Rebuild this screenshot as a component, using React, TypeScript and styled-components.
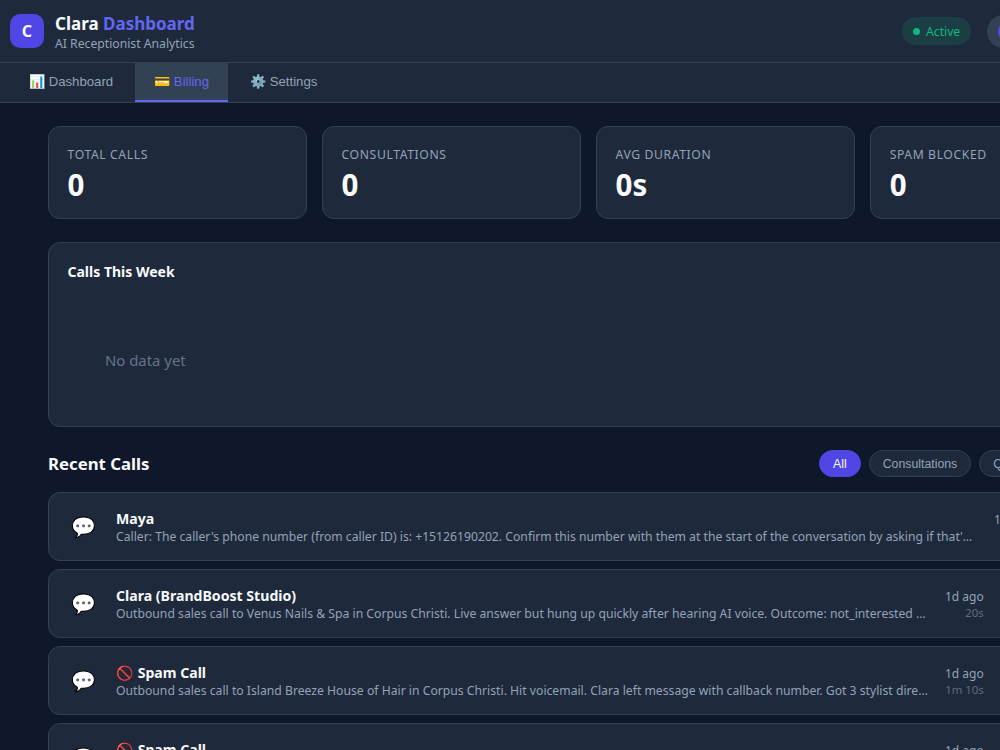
import { createGlobalStyle } from "styled-components"
import styled from "styled-components"

const GlobalStyle = createGlobalStyle`
  html, body {
    margin: 0;
    overflow: hidden;
    background: #0f172a;
    color: #f8fafc;
    font-family: "Noto Sans", sans-serif;
  }
`

const Page = styled.div`
  width: 1177px;
  min-height: 750px;
  background: #0f172a;
`

const Header = styled.header`
  height: 62px;
  display: flex;
  align-items: center;
  justify-content: space-between;
  padding: 0 70px 0 10px;
  background: #1e293b;
  border-bottom: 1px solid #334155;
`

const Brand = styled.div`
  display: flex;
  align-items: center;
  gap: 11px;
`

const Logo = styled.div`
  width: 34px;
  height: 34px;
  border-radius: 10px;
  background: #4f46e5;
  display: flex;
  align-items: center;
  justify-content: center;
  font-size: 16px;
  font-weight: 700;
`

const Title = styled.h1`
  margin: 1px 0 0;
  font-size: 17px;
  line-height: 24px;
  font-weight: 700;

  span {
    color: #6366f1;
  }
`

const Subtitle = styled.div`
  font-size: 12.2px;
  line-height: 16px;
  color: #94a3b8;
`

const HeaderRight = styled.div`
  display: flex;
  align-items: center;
  gap: 16px;
`

const Status = styled.div`
  height: 28px;
  width: 69px;
  box-sizing: border-box;
  padding-left: 11px;
  display: flex;
  align-items: center;
  gap: 6px;
  border-radius: 14px;
  background: rgba(16, 185, 129, 0.15);
  color: #10b981;
  font-size: 12.2px;
`

const Dot = styled.i`
  width: 7px;
  height: 7px;
  border-radius: 50%;
  background: #10b981;
`

const UserPill = styled.div`
  width: 120px;
  height: 33px;
  box-sizing: border-box;
  padding: 5px 11px;
  border-radius: 17px;
  background: #334155;

  &::before {
    content: "";
    display: block;
    width: 23px;
    height: 23px;
    border-radius: 50%;
    background: #4f46e5;
  }
`

const Tabs = styled.nav`
  display: flex;
  gap: 3px;
  height: 39px;
  padding-left: 10px;
  background: #1e293b;
  border-bottom: 1px solid #334155;
`

const Tab = styled.button<{ $active?: boolean }>`
  border: 0;
  border-bottom: 2px solid ${({ $active }) => ($active ? "#6366f1" : "transparent")};
  padding: 0 19px;
  background: ${({ $active }) => ($active ? "#334155" : "transparent")};
  color: ${({ $active }) => ($active ? "#6366f1" : "#94a3b8")};
  font-family: "Liberation Sans", sans-serif;
  font-size: 13.2px;
`

const Main = styled.main`
  padding: 23px 48px 0;
`

const Stats = styled.div`
  display: grid;
  grid-template-columns: repeat(4, 1fr);
  gap: 15.2px;
  margin-bottom: 23px;
`

const StatCard = styled.div`
  height: 93px;
  box-sizing: border-box;
  padding: 20px 18.5px 0;
  background: #1e293b;
  border: 1px solid #334155;
  border-radius: 12px;
`

const StatLabel = styled.div`
  font-size: 12.2px;
  line-height: 16px;
  letter-spacing: 0.6px;
  text-transform: uppercase;
  color: #94a3b8;
`

const StatValue = styled.div`
  margin-top: 3px;
  font-size: 29.5px;
  line-height: 38px;
  font-weight: 700;
`

const ChartCard = styled.section`
  height: 185px;
  box-sizing: border-box;
  padding: 19px 18.5px;
  background: #1e293b;
  border: 1px solid #334155;
  border-radius: 12px;
  margin-bottom: 21px;
`

const ChartTitle = styled.h3`
  margin: 0;
  font-size: 14px;
  line-height: 20px;
  font-weight: 700;
`

const Empty = styled.div`
  margin: 68px 0 0 37.5px;
  font-size: 14.9px;
  line-height: 20px;
  color: #64748b;
`

const SectionHead = styled.div`
  display: flex;
  align-items: center;
  justify-content: space-between;
  height: 30px;
  margin-bottom: 14px;
`

const SectionTitle = styled.h2`
  margin: 0;
  font-size: 16.8px;
  font-weight: 700;
`

const Filters = styled.div`
  display: flex;
  gap: 8px;
  margin-right: 14px;
`

const Filter = styled.button<{ $active?: boolean }>`
  height: 27px;
  padding: 1px 13px 0;
  border-radius: 14px;
  border: 1px solid ${({ $active }) => ($active ? "#4f46e5" : "#334155")};
  background: ${({ $active }) => ($active ? "#4f46e5" : "#1e293b")};
  color: ${({ $active }) => ($active ? "#f8fafc" : "#94a3b8")};
  font-family: "Liberation Sans", sans-serif;
  font-size: 12.3px;
`

const List = styled.div`
  display: flex;
  flex-direction: column;
  gap: 8px;
`

const Row = styled.div`
  height: 69px;
  box-sizing: border-box;
  display: flex;
  align-items: center;
  padding: 1px 19px 0 20px;
  background: #1e293b;
  border: 1px solid #334155;
  border-radius: 12px;
`

const RowIcon = styled.div`
  width: 30px;
  margin-right: 17px;
  text-align: center;
  font-size: 20px;
  font-family: "Noto Color Emoji", sans-serif;
`

const RowBody = styled.div<{ $wide?: boolean }>`
  width: ${({ $wide }) => ($wide ? "857px" : "813px")};
  margin-right: ${({ $wide }) => ($wide ? "21px" : "16px")};
  flex-shrink: 0;
`

const RowName = styled.div`
  font-size: 14.1px;
  line-height: 17px;
  font-weight: 700;
`

const RowText = styled.div`
  margin-top: 1px;
  font-size: 12.2px;
  line-height: 17px;
  color: #94a3b8;
  white-space: nowrap;
  overflow: hidden;
  text-overflow: ellipsis;
`

const RowMeta = styled.div`
  text-align: right;
  white-space: nowrap;
`

const When = styled.div`
  font-size: 12px;
  line-height: 17px;
  color: #94a3b8;
`

const Duration = styled.div`
  font-size: 11.4px;
  line-height: 15px;
  color: #5f6b7f;
`

const stats = [
  { label: "Total Calls", value: "0" },
  { label: "Consultations", value: "0" },
  { label: "Avg Duration", value: "0s" },
  { label: "Spam Blocked", value: "0" },
]

const calls = [
  {
    name: "Maya",
    wide: true,
    text: "Caller: The caller's phone number (from caller ID) is: +15126190202. Confirm this number with them at the start of the conversation by asking if that's the best number to reach them on today.",
    duration: "45s",
  },
  {
    name: "Clara (BrandBoost Studio)",
    text: "Outbound sales call to Venus Nails & Spa in Corpus Christi. Live answer but hung up quickly after hearing AI voice. Outcome: not_interested and no follow up is needed at this time.",
    duration: "20s",
  },
  {
    name: "🚫 Spam Call",
    text: "Outbound sales call to Island Breeze House of Hair in Corpus Christi. Hit voicemail. Clara left message with callback number. Got 3 stylist direct numbers from the recording.",
    duration: "1m 10s",
  },
  {
    name: "🚫 Spam Call",
    text: "Outbound sales call to a salon in Corpus Christi. Hit voicemail. Clara left message with callback number.",
    duration: "55s",
  },
]

export default function App() {
  return (
    <Page>
      <GlobalStyle />
      <Header>
        <Brand>
          <Logo>C</Logo>
          <div>
            <Title>
              Clara <span>Dashboard</span>
            </Title>
            <Subtitle>AI Receptionist Analytics</Subtitle>
          </div>
        </Brand>
        <HeaderRight>
          <Status>
            <Dot />
            Active
          </Status>
          <UserPill />
        </HeaderRight>
      </Header>
      <Tabs>
        <Tab>📊 Dashboard</Tab>
        <Tab $active>💳 Billing</Tab>
        <Tab>⚙️ Settings</Tab>
      </Tabs>
      <Main>
        <Stats>
          {stats.map((stat) => (
            <StatCard key={stat.label}>
              <StatLabel>{stat.label}</StatLabel>
              <StatValue>{stat.value}</StatValue>
            </StatCard>
          ))}
        </Stats>
        <ChartCard>
          <ChartTitle>Calls This Week</ChartTitle>
          <Empty>No data yet</Empty>
        </ChartCard>
        <SectionHead>
          <SectionTitle>Recent Calls</SectionTitle>
          <Filters>
            <Filter $active>All</Filter>
            <Filter>Consultations</Filter>
            <Filter>Quotes</Filter>
            <Filter>Spam</Filter>
          </Filters>
        </SectionHead>
        <List>
          {calls.map((call, i) => (
            <Row key={i}>
              <RowIcon>💬</RowIcon>
              <RowBody $wide={call.wide}>
                <RowName>{call.name}</RowName>
                <RowText>{call.text}</RowText>
              </RowBody>
              <RowMeta>
                <When>1d ago</When>
                <Duration>{call.duration}</Duration>
              </RowMeta>
            </Row>
          ))}
        </List>
      </Main>
    </Page>
  )
}
